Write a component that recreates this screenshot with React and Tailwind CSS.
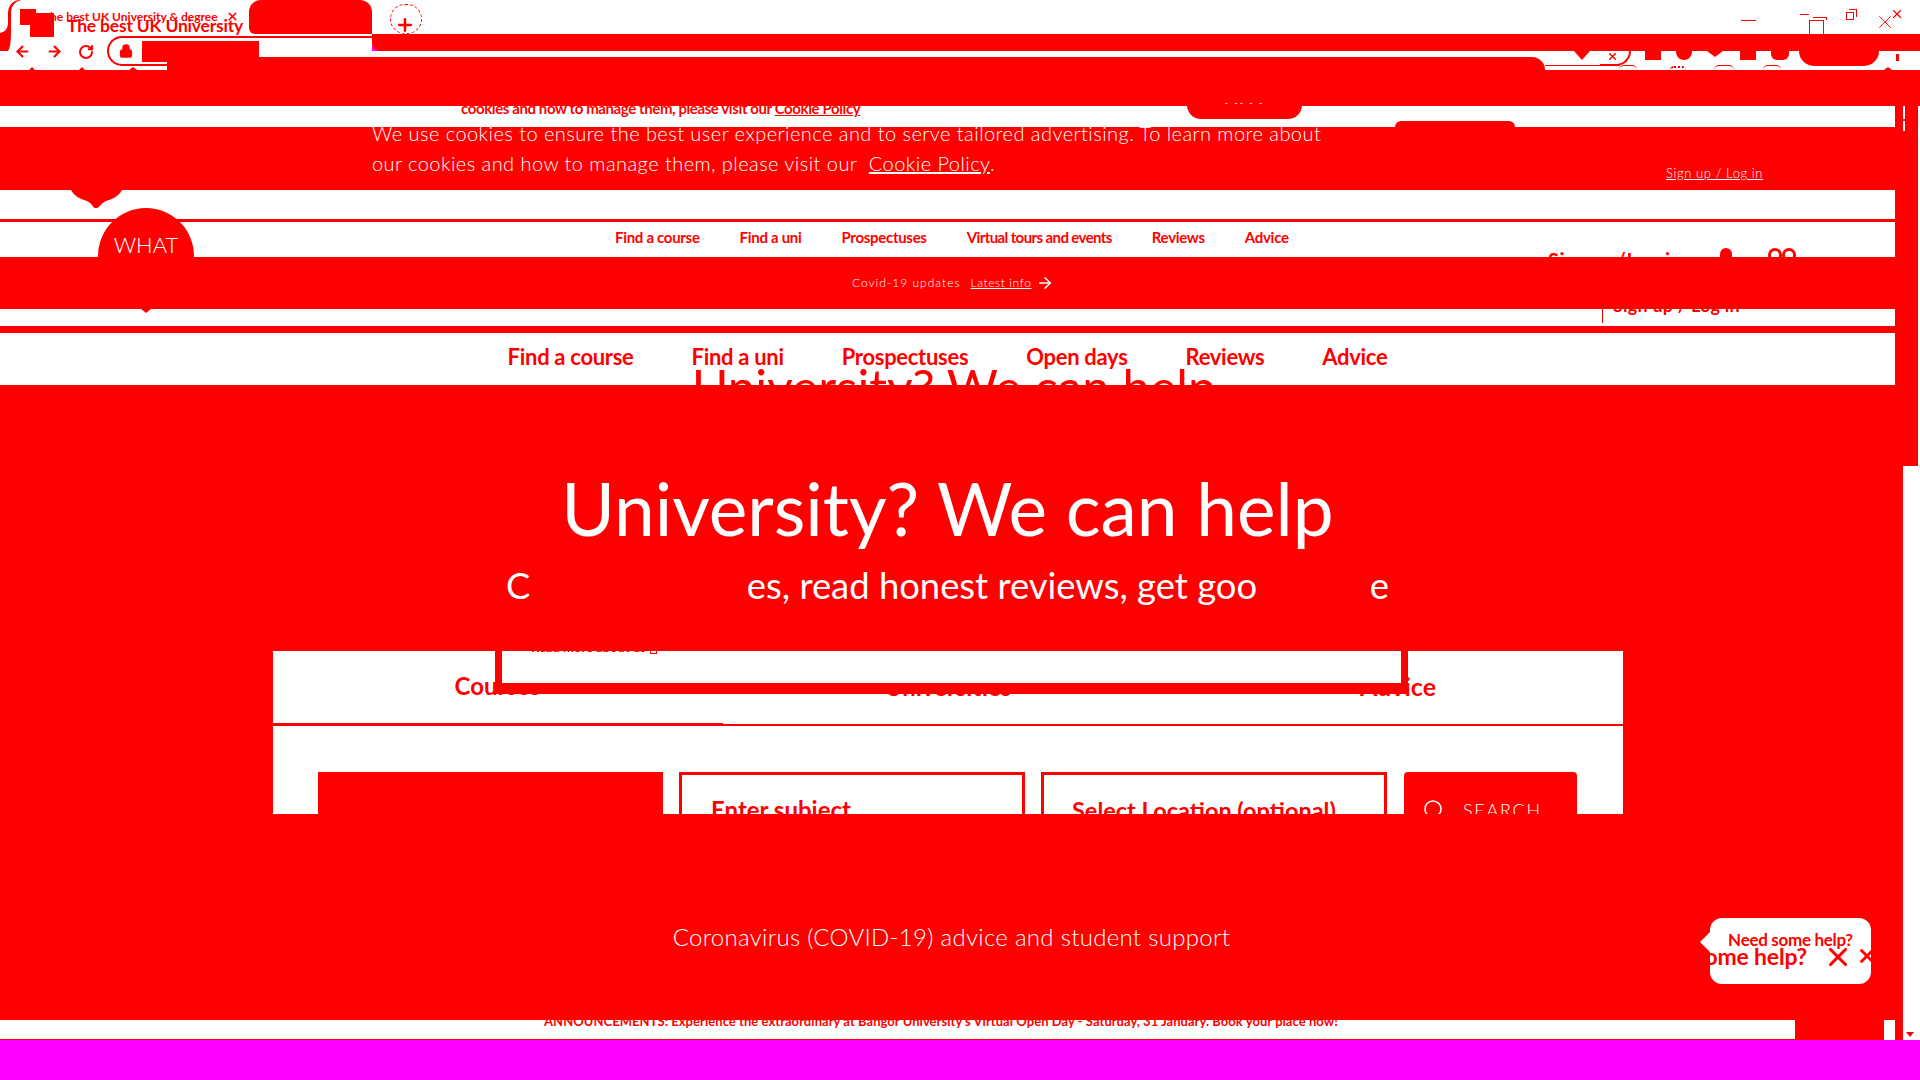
import React from 'react'
import { ArrowLeft, ArrowRight, RotateCw, Lock, Plus, X, Search } from 'lucide-react'

const topNav = ['Find a course', 'Find a uni', 'Prospectuses', 'Virtual tours and events', 'Reviews', 'Advice']
const mainNav = ['Find a course', 'Find a uni', 'Prospectuses', 'Open days', 'Reviews', 'Advice']

const BrowserTabs = () => (
  <div className="relative flex h-[34px] bg-white">
    {/* left edge of the active tab */}
    <svg className="absolute left-0 top-0 z-10" width="24" height="51" viewBox="0 0 24 51">
      <path d="M0 51V33C5 32 8 29 8 22V14C8 6 12 1 19 0H21C14 2 11 7 11 14V30C11 42 10 48 8 51Z" fill="#f00" />
    </svg>
    <div className="ml-[249px] h-[34px] w-[123px] rounded-t-xl rounded-bl-md bg-[#f00]"></div>
    <div className="ml-[33px] mt-[25px] flex h-0 items-center">
      <Plus size={20} strokeWidth={3} className="-ml-[10px] text-[#f00]" />
    </div>
    <div className="absolute left-[390px] top-[4px] h-[30px] w-[32px] rounded-full border border-dashed border-[#f00]"></div>

    {/* favicon */}
    <div className="absolute left-[20px] top-[9px] h-[16px] w-[16px] bg-[#f00]"></div>
    <div className="absolute left-[30px] top-[13px] z-20 h-[24px] w-[24px] bg-[#f00]"></div>
    <span className="absolute left-[43px] top-[9px] text-[12px] font-bold leading-4 whitespace-nowrap text-[#f00]">The best UK University &amp; degree</span>
    <X size={13} strokeWidth={3} className="absolute left-[226px] top-[10px] text-[#f00]" />
    <span className="absolute left-[67px] top-[14px] z-20 text-[17.5px] font-bold leading-6 tracking-[-0.2px] whitespace-nowrap text-[#f00]">The best UK University</span>

    {/* window controls */}
    <div className="absolute left-[1741px] top-[20px] h-px w-[15px] bg-[#f00]"></div>
    <div className="absolute left-[1800px] top-[14px] h-px w-[9px] bg-[#f00]"></div>
    <div className="absolute left-[1809px] top-[20px] h-[15px] w-[15px] border border-[#f00]"></div>
    <div className="absolute left-[1813px] top-[17px] h-[3px] w-[14px] border-r border-t border-[#f00]"></div>
    <div className="absolute left-[1846px] top-[12px] h-[8px] w-[8px] border border-[#f00]"></div>
    <div className="absolute left-[1849px] top-[9px] h-[8px] w-[8px] border-r border-t border-[#f00]"></div>
    <X size={22} strokeWidth={1} className="absolute left-[1874px] top-[11px] text-[#f00]" />
    <X size={14} strokeWidth={2} className="absolute left-[1890px] top-[7px] text-[#f00]" />
  </div>
)

const Toolbar = () => (
  <div className="relative h-[36px]">
    <div className="flex h-[17px]">
      <div className="w-[372px] bg-white"></div>
      <div className="flex-1 rounded-bl-lg bg-[#f00]"></div>
    </div>
    <div className="flex h-[19px] bg-white">
      <div className="w-[167px]"></div>
      <div className="flex-1">
        <div className="ml-[92px] h-[6px] bg-white"></div>
        <div className="h-[13px] w-[1378px] rounded-tr-[14px] bg-[#f00]"></div>
      </div>
      {/* extension icons poking below the red band */}
      <div className="flex w-[375px] items-start">
        <div className="ml-[29px] h-0 w-0 border-x-[8px] border-t-[9px] border-x-transparent border-t-[#f00]"></div>
        <X size={11} strokeWidth={3} className="ml-[17px] text-[#f00]" />
        <div className="ml-[27px] h-[9px] w-[16px] bg-[#f00]"></div>
        <div className="ml-[15px] h-[9px] w-[16px] rounded-b-full bg-[#f00]"></div>
        <div className="ml-[15px] h-0 w-0 border-x-[8px] border-t-[6px] border-x-transparent border-t-[#f00]"></div>
        <div className="ml-[17px] h-[9px] w-[16px] bg-[#f00]"></div>
        <div className="ml-[15px] h-[9px] w-[18px] rounded-b-md bg-[#f00]"></div>
        <div className="ml-[10px] h-[15px] w-[80px] rounded-b-[15px] bg-[#f00]"></div>
        <div className="ml-[17px] mt-[3px] h-[7px] w-[3px] bg-[#f00]"></div>
      </div>
    </div>

    {/* left controls and address bar */}
    <ArrowLeft size={17} strokeWidth={3} className="absolute left-[14px] top-[9px] text-[#f00]" />
    <ArrowRight size={17} strokeWidth={3} className="absolute left-[46px] top-[9px] text-[#f00]" />
    <RotateCw size={16} strokeWidth={3} className="absolute left-[78px] top-[10px] text-[#f00]" />
    <div className="absolute left-[107px] top-[2px] h-[30px] w-[265px] rounded-l-full border-2 border-r-0 border-[#f00]"></div>
    <Lock size={14} strokeWidth={3} fill="#f00" className="absolute left-[119px] top-[10px] text-[#f00]" />
    <div className="absolute left-[142px] top-[7px] h-[21px] w-[117px] bg-[#f00]"></div>
    <div className="absolute left-[1545px] top-[31px] h-px w-[75px] bg-[#f00]"></div>
    <div className="absolute left-[1600px] top-[17px] h-[15px] w-[31px] rounded-br-[15px] border-b-2 border-r-2 border-[#f00]"></div>

    {/* tops of the bookmark icons just above the page */}
    <div className="absolute left-[29px] top-[33px] h-0 w-0 border-x-[3px] border-b-[3px] border-x-transparent border-b-[#f00]"></div>
    <div className="absolute left-[79px] top-[33px] h-0 w-0 border-x-[3px] border-b-[3px] border-x-transparent border-b-[#f00]"></div>
    <div className="absolute left-[129px] top-[33px] h-0 w-0 border-x-[4px] border-b-[3px] border-x-transparent border-b-[#f00]"></div>
    <div className="absolute left-[1619px] top-[31px] h-[5px] w-[18px] rounded-t-full border-t border-[#f00]"></div>
    <div className="absolute left-[1670px] top-[32px] h-[4px] w-[16px] rounded-t-full border-t-2 border-dotted border-[#f00]"></div>
    <div className="absolute left-[1714px] top-[31px] h-[5px] w-[20px] rounded-t-full border-t border-[#f00]"></div>
    <div className="absolute left-[1763px] top-[31px] h-[5px] w-[18px] rounded-t-full border-t border-[#f00]"></div>
    <div className="absolute left-[1884px] top-[33px] h-0 w-0 border-x-[4px] border-b-[3px] border-x-transparent border-b-[#f00]"></div>
  </div>
)

const ScrollStrip = () => (
  <div className="flex w-[25px] shrink-0 flex-col">
    <div className="flex h-[360px]">
      <div className="w-[8px] bg-[#f00]"></div>
      <div className="w-[2px] bg-[#f00]">
        <div className="h-[13px] bg-white"></div>
        <div className="h-[2px]"></div>
        <div className="h-[10px] bg-white"></div>
      </div>
      <div className="w-[13px] bg-[#f00]"></div>
      <div className="w-[2px] bg-white"></div>
    </div>
    <div className="flex flex-1">
      <div className="w-[8px] bg-[#f00]"></div>
      <div className="flex flex-1 flex-col items-center justify-end bg-white pb-[3px]">
        <div className="h-0 w-0 translate-x-[-2px] border-x-[4px] border-t-[5px] border-x-transparent border-t-[#f00]"></div>
      </div>
    </div>
  </div>
)

const SearchPanel = () => (
  <div className="flex h-[163px] bg-[#f00]">
    <div className="relative ml-[273px] h-full w-[1350px] bg-white">
      <div className="grid h-[75px] grid-cols-3 font-bold">
        <div className="flex h-[75px] items-center justify-center border-b-[3px] border-[#f00] pb-[2px]">
          <span className="ml-[-1px] text-[24px] leading-none text-[#f00]">Courses</span>
        </div>
        <div className="flex h-[75px] items-center justify-center border-b-2 border-[#f00] pb-[2px]">
          <span className="text-[24px] leading-none text-[#f00]">Universities</span>
        </div>
        <div className="flex h-[75px] items-center justify-center border-b-2 border-[#f00] pb-[2px]">
          <span className="text-[25px] leading-none text-[#f00]">Advice</span>
        </div>
      </div>

      {/* red frame lying over the tabs */}
      <div className="absolute left-[222px] top-0 h-[43px] w-[913px] overflow-hidden border-x-[7px] border-b-[11px] border-[#f00] bg-white">
        <p className="ml-[29px] mt-[-12px] flex items-center text-[13px] font-bold leading-4 text-[#f00]">
          Read more about us<span className="ml-[4px] h-[14px] w-[7px] border border-[#f00]"></span>
        </p>
      </div>

      <div className="flex h-[88px] gap-[16px] overflow-hidden px-[45px] pt-[46px]">
        <div className="h-[60px] w-[345px] shrink-0 bg-[#f00]"></div>
        <div className="h-[60px] w-[346px] shrink-0 border-[3px] border-[#f00] pl-[29px] pt-[23px] text-[24px] font-bold leading-6 text-[#f00]">Enter subject</div>
        <div className="h-[60px] w-[346px] shrink-0 border-[3px] border-[#f00] pl-[28px] pt-[23px] text-[23.5px] font-bold leading-6 whitespace-nowrap text-[#f00]">Select Location (optional)</div>
        <div className="ml-px flex h-[60px] w-[173px] shrink-0 items-start gap-[17px] rounded-t-sm bg-[#f00] pl-[18px] pt-[26px] text-white">
          <Search size={24} strokeWidth={1.5} />
          <span className="text-[18px] font-light leading-6 tracking-[1.7px]">SEARCH</span>
        </div>
      </div>
    </div>
  </div>
)

const App = () => {
  return (
    <div className="h-[1080px] w-[1920px] overflow-hidden bg-[#f0f] font-['Lato',sans-serif]">
      <BrowserTabs />
      <Toolbar />
      <div className="h-[36px] bg-[#f00]"></div>

      <div className="flex h-[934px]">
        <main className="relative w-[1895px] shrink-0">
          {/* Cookie strip */}
          <div className="relative h-[21px] overflow-visible bg-white">
            <div className="h-[21px] overflow-hidden pl-[461px]">
              <p className="mt-[-8px] text-[15px] font-bold leading-5 tracking-[-0.4px] whitespace-nowrap text-[#f00]">
                cookies and how to manage them, please visit our <span className="underline">Cookie Policy</span>
              </p>
            </div>
            <div className="absolute left-[1187px] top-[-1px] flex h-[14px] w-[115px] justify-center rounded-b-[14px] bg-[#f00]">
              <span className="mt-[-8px] text-[9px] leading-3 tracking-[2px] text-white">- -- - -</span>
            </div>
            <div className="absolute left-[1395px] top-[15px] h-[6px] w-[120px] rounded-t-[10px] bg-[#f00]"></div>
          </div>

          {/* Cookie banner */}
          <div className="relative h-[63px] bg-[#f00] pl-[372px] text-[20px] font-light leading-[30px] tracking-[0.45px] text-white">
            <div className="-translate-y-[9px]">
              <p className="whitespace-nowrap">We use cookies to ensure the best user experience and to serve tailored advertising. To learn more about</p>
              <p className="whitespace-nowrap">our cookies and how to manage them, please visit our <span className="ml-[6px] underline">Cookie Policy</span>.</p>
            </div>
            <span className="absolute left-[1666px] top-[38px] text-[13px] leading-4 tracking-[0.6px] underline">Sign up / Log in</span>
          </div>

          <div className="relative h-[29px] bg-white">
            <svg className="absolute left-[70px] top-0" width="54" height="19" viewBox="0 0 54 19">
              <path d="M1 0H52C48 7 42 9 36 11C31 13 29 18 27 18H25C23 18 22 13 17 11C11 9 5 7 1 0Z" fill="#f00" />
            </svg>
          </div>
          <div className="h-[3px] bg-[#f00]"></div>

          {/* Top nav */}
          <div className="relative flex h-[35px] items-center overflow-hidden bg-white pl-[615px]">
            <nav className="mt-[-4px] flex gap-[40px] text-[15px] font-bold tracking-[-0.3px] text-[#f00]">
              {topNav.map((item) => (
                <span key={item} className={item.startsWith('Virtual') ? 'tracking-[-0.6px]' : ''}>{item}</span>
              ))}
            </nav>
            <span className="absolute left-[1548px] top-[26px] text-[20px] font-bold leading-6 tracking-[0.5px] text-[#f00]">Sign up/Log in</span>
            <div className="absolute left-[1720px] top-[26px] h-[14px] w-[12px] rounded-full bg-[#f00]"></div>
            <div className="absolute left-[1768px] top-[26px] h-[14px] w-[14px] rounded-full border-[3px] border-[#f00]"></div>
            <div className="absolute left-[1782px] top-[26px] h-[14px] w-[14px] rounded-full border-[3px] border-[#f00]"></div>
          </div>

          {/* Notice bar */}
          <div className="flex h-[52px] items-center bg-[#f00] pl-[852px] text-white">
            <span className="text-[12px] font-light tracking-[1px]">Covid-19 updates</span>
            <span className="ml-[10px] text-[12px] font-light tracking-[0.6px] underline">Latest info</span>
            <ArrowRight size={18} strokeWidth={2} className="ml-[5px]" />
          </div>

          <div className="relative h-[17px] overflow-hidden bg-white">
            <div className="absolute left-[141px] top-0 h-0 w-0 border-x-[5px] border-t-[4px] border-x-transparent border-t-[#f00]"></div>
            <div className="absolute left-[1602px] top-0 h-[14px] w-px bg-[#f00]"></div>
            <span className="absolute left-[1613px] top-[-16px] text-[18px] font-bold leading-6 tracking-[0.2px] text-[#f00]">Sign up / Log in</span>
          </div>
          <div className="h-[7px] bg-[#f00]"></div>

          {/* Main nav */}
          <div className="relative h-[52px] overflow-hidden bg-white">
            <nav className="flex justify-center gap-[58px] pt-[10px] text-[22px] font-bold leading-7 tracking-[-0.3px] text-[#f00]">
              {mainNav.map((item) => (
                <span key={item}>{item}</span>
              ))}
            </nav>
            <p className="absolute left-[692px] top-[24px] text-[49.5px] leading-[60px] whitespace-nowrap text-[#f00]">University? We can help</p>
          </div>

          {/* Hero */}
          <section className="flex h-[266px] flex-col items-center bg-[#f00] pt-[83px] text-white">
            <h1 className="text-[73px] leading-[80px] whitespace-nowrap">University? We can help</h1>
            <p className="mt-[17px] text-[36.4px] leading-10 whitespace-nowrap">
              C<span className="text-transparent">ompare cours</span>es, read honest reviews, get goo<span className="text-transparent">d advic</span>e
            </p>
          </section>

          <SearchPanel />

          {/* Coronavirus strip */}
          <div className="flex h-[206px] justify-center bg-[#f00] pt-[109px] text-white">
            <p className="ml-[8px] text-[24px] font-light leading-7 tracking-[0.3px]">Coronavirus (COVID-19) advice and student support</p>
          </div>

          <div className="flex h-[20px] bg-white">
            <div className="w-[1795px] overflow-hidden border-b border-[#f00]">
              <p className="ml-[544px] mt-[-7px] text-[13px] font-bold leading-4 tracking-[0.05px] whitespace-nowrap text-[#f00]">
                ANNOUNCEMENTS: Experience the extraordinary at Bangor University's Virtual Open Day - Saturday, 31 January. Book your place now!
              </p>
            </div>
            <div className="w-[89px] bg-[#f00]"></div>
          </div>

          {/* Logo */}
          <div className="absolute left-[98px] top-[102px] flex h-[96px] w-[96px] justify-center rounded-full bg-[#f00] pt-[23px]">
            <span className="text-[22px] font-light leading-7 text-white">WHAT</span>
          </div>

          {/* Help bubble */}
          <div className="absolute left-[1710px] top-[812px] h-[66px] w-[161px] overflow-hidden rounded-xl bg-white font-bold text-[#f00]">
            <p className="mt-[13px] text-center text-[17px] leading-[18px] tracking-[-0.3px]">Need some help?</p>
            <p className="ml-[-75px] mt-[-7px] text-[23px] leading-7 tracking-[-0.2px] whitespace-nowrap">Need some help?</p>
            <X size={30} strokeWidth={2.5} className="absolute left-[113px] top-[24px]" />
            <X size={22} strokeWidth={3} className="absolute left-[146px] top-[27px]" />
          </div>
          <div className="absolute left-[1700px] top-[826px] h-0 w-0 border-y-[10px] border-r-[10px] border-y-transparent border-r-white"></div>
        </main>
        <ScrollStrip />
      </div>
    </div>
  )
}

export default App
